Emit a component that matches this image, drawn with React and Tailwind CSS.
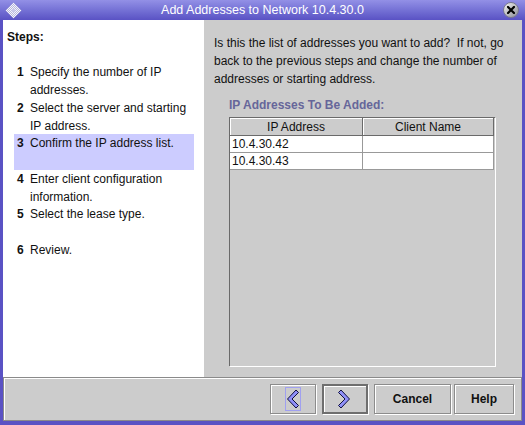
import React from 'react';

const steps = [
  { n: 1, lines: ['Specify the number of IP', 'addresses.'] },
  { n: 2, lines: ['Select the server and starting', 'IP address.'] },
  { n: 3, lines: ['Confirm the IP address list.'], active: true },
  { n: 4, lines: ['Enter client configuration', 'information.'] },
  { n: 5, lines: ['Select the lease type.'] },
  { n: 6, lines: ['Review.'] },
];

const rows = ['10.4.30.42', '10.4.30.43'];

function Chevron({ dir }) {
  // thick angle bracket, blue fill with dark outline
  const pts = dir === 'left' ? '10,1 12.5,3.5 6,10 12.5,16.5 10,19 1.5,10' : '3,1 0.5,3.5 7,10 0.5,16.5 3,19 11.5,10';
  return (
    <svg width="14" height="20" viewBox="0 0 14 20">
      <polygon points={pts} fill="#9090f8" stroke="#101040" strokeWidth="1" strokeLinejoin="miter" />
    </svg>
  );
}

function TitleBar() {
  return (
    <div className="h-[20px] relative flex items-center justify-center bg-gradient-to-b from-[#9390e6] to-[#5a52c4]">
      {/* window menu diamond */}
      <svg className="absolute left-[5px] top-[2px]" width="17" height="17" viewBox="0 0 17 17">
        <defs>
          <pattern id="chk" width="2" height="2" patternUnits="userSpaceOnUse">
            <rect width="2" height="2" fill="#f4f4ff" />
            <rect width="1" height="1" fill="#b8b8d8" />
            <rect x="1" y="1" width="1" height="1" fill="#b8b8d8" />
          </pattern>
        </defs>
        <polygon points="8.5,0.5 16.5,8.5 8.5,16.5 0.5,8.5" fill="url(#chk)" />
        <circle cx="8.5" cy="8.5" r="2" fill="#c8c8e8" />
      </svg>
      <span className="text-white text-[12.5px] leading-none">Add Addresses to Network 10.4.30.0</span>
      {/* close button */}
      <div className="absolute right-[6px] top-[2px] w-[16px] h-[16px] rounded-full bg-gradient-to-br from-[#f2f2f2] to-[#8e8e96] border border-[#7a7a90] flex items-center justify-center">
        <svg width="8" height="8" viewBox="0 0 8 8">
          <path d="M1 1 L7 7 M7 1 L1 7" stroke="#000" strokeWidth="2.2" strokeLinecap="square" />
        </svg>
      </div>
    </div>
  );
}

function Steps() {
  return (
    <div className="w-[201px] bg-white pt-[8px] pl-[4px]">
      <div className="font-bold leading-[18px]">Steps:</div>
      <div className="mt-[17px] ml-[7px] w-[180px]">
        {steps.map((s) => (
          <div
            key={s.n}
            className={`h-[35.6px] flex pl-[3px] leading-[18px] ${s.active ? 'bg-[#ccccff]' : ''}`}
          >
            <span className="w-[13px] font-bold shrink-0">{s.n}</span>
            <span className="whitespace-nowrap">
              {s.lines.map((l, i) => (
                <div key={i}>{l}</div>
              ))}
            </span>
          </div>
        ))}
      </div>
    </div>
  );
}

function AddressTable() {
  return (
    <div className="ml-[15px] mt-[3px] w-[266px] h-[249px] border-t border-l border-[#6a6a6a] shadow-[1px_1px_0_#ffffff] bg-[#cccccc]">
      <div className="flex h-[18px] w-[264px] border-b border-[#6a6a6a]">
        <div className="w-[133px] border-r border-[#6a6a6a] shadow-[inset_1px_1px_0_#ffffff] flex items-center justify-center">IP Address</div>
        <div className="flex-1 border-r border-[#6a6a6a] shadow-[inset_1px_1px_0_#ffffff] flex items-center justify-center">Client Name</div>
      </div>
      {rows.map((ip) => (
        <div key={ip} className="flex h-[17px] w-[264px] bg-white border-b border-[#999999]">
          <div className="w-[133px] border-r border-[#999999] pl-[2px] flex items-center">{ip}</div>
          <div className="flex-1 border-r border-[#999999]" />
        </div>
      ))}
    </div>
  );
}

function Btn({ w, children, focused }) {
  return (
    <div
      className={`h-[30px] flex items-center justify-center font-bold shadow-[1px_1px_0_#ffffff,inset_1px_1px_0_#ffffff] ${
        focused ? 'border-2 border-[#6e6e6e]' : 'border border-[#8c8c8c]'
      } ${w}`}
    >
      {children}
    </div>
  );
}

export default function App() {
  return (
    <div className="w-[525px] h-[425px] bg-[#5a52c4] flex flex-col font-['Liberation_Sans',Arial,sans-serif] text-[12px] text-[#111]">
      <TitleBar />
      <div className="mx-[3px] flex flex-col">
        <div className="flex h-[357px]">
          <Steps />
          <div className="flex-1 bg-[#cccccc] pt-[14px] pl-[10px]">
            <p className="leading-[18px] whitespace-nowrap">
              Is this the list of addresses you want to add?&nbsp; If not, go
              <br />
              back to the previous steps and change the number of
              <br />
              addresses or starting address.
            </p>
            <div className="mt-[8px] ml-[15px] font-bold leading-[18px] text-[#66669a]">IP Addresses To Be Added:</div>
            <AddressTable />
          </div>
        </div>
        <div className="h-[44px] bg-[#cccccc] border border-[#8a8a8a] shadow-[inset_1px_1px_0_#ffffff] flex justify-end items-start pt-[6px] pr-[7px]">
          <Btn w="w-[46px]">
            <div className="border border-[#a0a0f0] px-[0px] py-[1px] flex">
              <Chevron dir="left" />
            </div>
          </Btn>
          <div className="w-[6px]" />
          <Btn w="w-[46px]" focused>
            <Chevron dir="right" />
          </Btn>
          <div className="w-[6px]" />
          <Btn w="w-[77px]">Cancel</Btn>
          <div className="w-[3px]" />
          <Btn w="w-[60px]">Help</Btn>
        </div>
      </div>
    </div>
  );
}
